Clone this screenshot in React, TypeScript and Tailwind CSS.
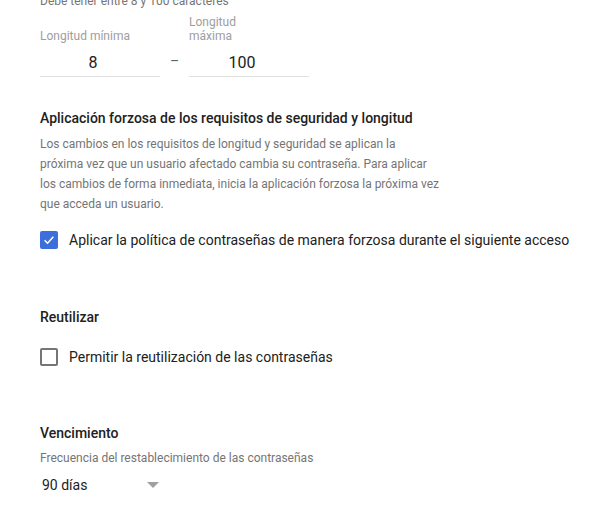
import React from "react";

function CheckBox({ checked }: { checked: boolean }) {
  if (checked) {
    return (
      <div className="w-[18px] h-[18px] rounded-[2px] bg-[#3c6fdc] flex items-center justify-center shrink-0">
        <svg width="14" height="14" viewBox="0 0 24 24">
          <path d="M4.5 12.5l5 5 10-11" fill="none" stroke="#ffffff" strokeWidth="2.6" />
        </svg>
      </div>
    );
  }
  return <div className="w-[18px] h-[18px] rounded-[2px] border-2 border-[#757575] shrink-0" />;
}

export default function App() {
  return (
    <div className="w-[607px] h-[532px] overflow-hidden bg-white pl-[40px] font-['Roboto',sans-serif]">
      <div className="mt-[-7px] text-[12px] leading-[16px] text-[#757575]">Debe tener entre 8 y 100 caracteres</div>
      <div className="mt-[6px] flex items-end">
        <div className="w-[120px] flex flex-col">
          <div className="text-[12px] leading-[14px] text-[#9e9e9e]">Longitud mínima</div>
          <div className="h-[34px] border-b border-[#e0e0e0] pt-[10px] pr-[14px] text-center text-[16px] leading-[20px] text-[#212121]">8</div>
        </div>
        <div className="w-[29px] h-[34px] flex items-center justify-center pt-[2px] text-[14px] text-[#5f6368]">–</div>
        <div className="w-[120px] flex flex-col">
          <div className="text-[12px] leading-[14px] text-[#9e9e9e]">
            Longitud
            <br />
            máxima
          </div>
          <div className="h-[34px] border-b border-[#e0e0e0] pt-[10px] pr-[14px] text-center text-[16px] leading-[20px] text-[#212121]">100</div>
        </div>
      </div>

      <div className="mt-[31px] text-[14px] leading-[20px] font-medium text-[#212121]">
        Aplicación forzosa de los requisitos de seguridad y longitud
      </div>
      <div className="mt-[6px] w-[400px] text-[12px] leading-[20px] text-[#757575]">
        Los cambios en los requisitos de longitud y seguridad se aplican la próxima vez que un usuario afectado cambia su contraseña. Para aplicar los cambios de forma inmediata, inicia la aplicación forzosa la próxima vez que acceda un usuario.
      </div>
      <div className="mt-[14px] h-[24px] flex items-center gap-[11px]">
        <CheckBox checked />
        <span className="text-[14px] leading-[20px] text-[#212121]">
          Aplicar la política de contraseñas de manera forzosa durante el siguiente acceso
        </span>
      </div>

      <div className="mt-[55px] text-[14px] leading-[20px] font-medium text-[#212121]">Reutilizar</div>
      <div className="mt-[18px] h-[24px] flex items-center gap-[11px]">
        <CheckBox checked={false} />
        <span className="text-[14px] leading-[20px] text-[#212121]">Permitir la reutilización de las contraseñas</span>
      </div>

      <div className="mt-[54px] text-[14px] leading-[20px] font-medium text-[#212121]">Vencimiento</div>
      <div className="mt-[7px] text-[12px] leading-[16px] text-[#757575]">Frecuencia del restablecimiento de las contraseñas</div>
      <div className="mt-[9px] w-[120px] flex items-center justify-between pl-[2px]">
        <span className="text-[14px] leading-[20px] text-[#212121]">90 días</span>
        <svg width="12" height="6" viewBox="0 0 12 6" className="mr-[1px]">
          <path d="M0 0h12L6 6z" fill="#a0a0a0" />
        </svg>
      </div>
    </div>
  );
}
